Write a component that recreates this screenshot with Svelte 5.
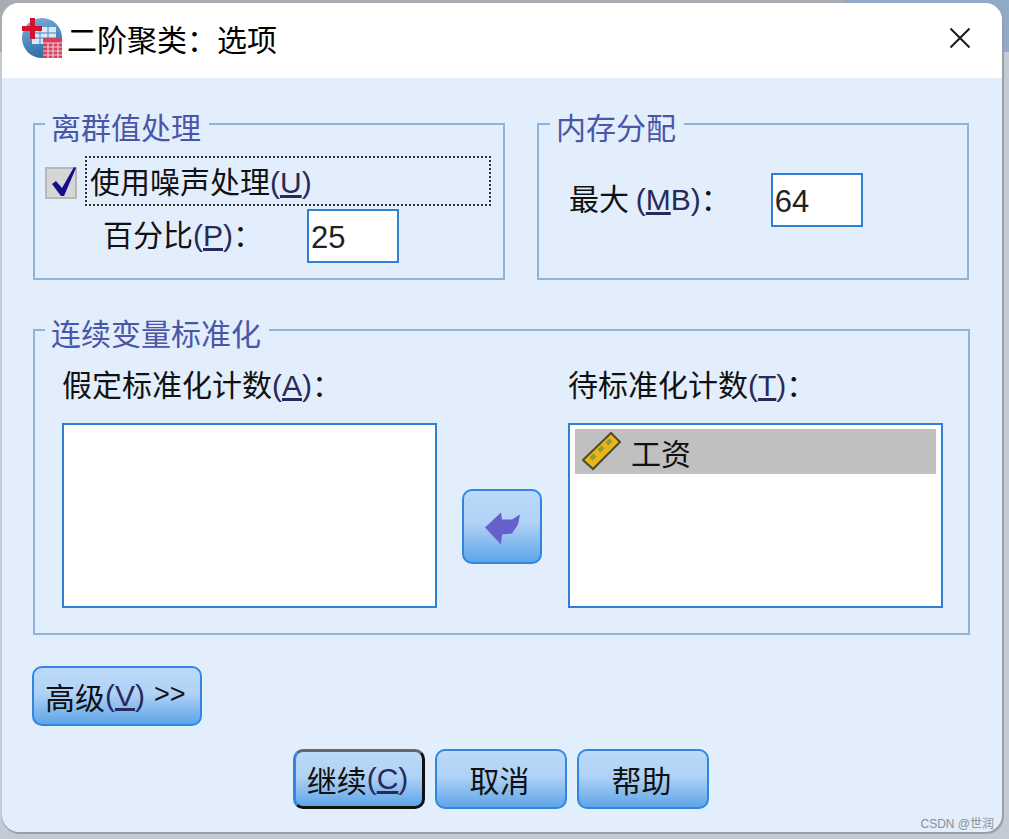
<script>
  const listItems = [{ name: '工资' }];
</script>

<div class="backdrop">
  <div class="dialog">
    <header class="titlebar">
      <svg class="app-icon" width="40" height="40" viewBox="0 0 40 40">
        <defs>
          <linearGradient id="orb" x1="0" y1="0" x2="0.3" y2="1">
            <stop offset="0" stop-color="#7fb2de" />
            <stop offset="1" stop-color="#2f6ea8" />
          </linearGradient>
        </defs>
        <circle cx="20" cy="20" r="20" fill="url(#orb)" />
        <rect x="10" y="9" width="24" height="17" fill="#d9e9f7" />
        <path d="M10 15h24M10 20h24M18 9v17M26 9v17" stroke="#6fa3d2" stroke-width="1.5" />
        <rect x="0" y="8" width="20" height="5" fill="#d3122e" />
        <rect x="8" y="0" width="5" height="21" fill="#d3122e" />
        <rect x="21" y="20" width="19" height="20" fill="#d8405f" />
        <path d="M21 25h19M21 29h19M21 33h19M21 37h19M26 25v15M31 25v15M36 25v15" stroke="#f6c9d3" stroke-width="1.2" />
      </svg>
      <span class="title">二阶聚类：选项</span>
      <svg class="close" width="20" height="20" viewBox="0 0 20 20">
        <path d="M0.5 0.5l19 19M19.5 0.5l-19 19" stroke="#1a1a1a" stroke-width="2" fill="none" />
      </svg>
    </header>

    <div class="content">
      <div class="top-row">
        <fieldset class="group noise">
          <legend>离群值处理</legend>
          <div class="check-row">
            <span class="checkbox">
              <svg width="32" height="32" viewBox="0 0 32 32">
                <path d="M7 17l4-3 6 7L29 0l2 1-12 28h-3z" fill="#14108c" />
              </svg>
            </span>
            <span class="focus-label">使用噪声处理<span class="mn">(<u>U</u>)</span></span>
          </div>
          <div class="percent-row">
            <span class="label">百分比<span class="mn">(<u>P</u>)</span>：</span>
            <input class="num" value="25" />
          </div>
        </fieldset>

        <fieldset class="group memory">
          <legend>内存分配</legend>
          <div class="memory-row">
            <span class="label">最大 <span class="mn">(<u>M</u>B)</span>：</span>
            <input class="num" value="64" />
          </div>
        </fieldset>
      </div>

      <fieldset class="group standard">
        <legend>连续变量标准化</legend>
        <div class="lists">
          <div class="list-col">
            <span class="label">假定标准化计数<span class="mn">(<u>A</u>)</span>：</span>
            <div class="listbox"></div>
          </div>
          <button class="btn arrow" aria-label="移动">
            <svg width="40" height="40" viewBox="0 0 40 40">
              <path d="M3 20.5L19 5.5l1 7h10l8-5-2 10-6 9-10 1-1 10z" fill="#6660cc" />
            </svg>
          </button>
          <div class="list-col">
            <span class="label">待标准化计数<span class="mn">(<u>T</u>)</span>：</span>
            <div class="listbox">
              {#each listItems as item}
                <div class="list-item">
                  <svg width="40" height="40" viewBox="0 0 40 40">
                    <path d="M1 28L29 1l9 9-27 27z" fill="#e8b715" stroke="#4e4a2c" stroke-width="2" />
                    <path d="M9 27l4-4M17 19l4-4M25 12l4-4" stroke="#8d9a3a" stroke-width="4" />
                  </svg>
                  <span>{item.name}</span>
                </div>
              {/each}
            </div>
          </div>
        </div>
      </fieldset>

      <div class="advanced-row">
        <button class="btn advanced">高级<span class="mn">(<u>V</u>)</span><span class="more">&gt;&gt;</span></button>
      </div>

      <div class="actions">
        <button class="btn action default">继续<span class="mn">(<u>C</u>)</span></button>
        <button class="btn action">取消</button>
        <button class="btn action">帮助</button>
      </div>
    </div>

    <span class="watermark">CSDN @世润</span>
  </div>
</div>

<style>
  :global(body) {
    margin: 0;
    background: #c3cad3;
  }

  .backdrop {
    width: 1009px;
    height: 839px;
    padding: 3px 0 0 2px;
    box-sizing: border-box;
    overflow: hidden;
    background:
      linear-gradient(90deg, #a9adb3 0, #a9adb3 845px, #8fa9c9 845px) top / 100% 52px no-repeat,
      #c3cad3;
  }

  .dialog {
    position: relative;
    width: 1000px;
    height: 829px;
    box-sizing: border-box;
    border-radius: 17px;
    overflow: hidden;
    background: #e2eefb;
    box-shadow: 1px 1px 0 1px #9aa0a8;
    font-family: "Noto Sans CJK SC", "Liberation Sans", sans-serif;
    font-size: 30px;
    color: #111;
  }

  .titlebar {
    height: 75px;
    background: #fff;
    display: flex;
    align-items: center;
    padding: 0 32px 5px 20px;
    box-sizing: border-box;
  }

  .app-icon {
    flex: none;
    margin-right: 5px;
  }

  .title {
    font-size: 30px;
    line-height: 1;
    color: #000;
    flex: 1;
  }

  .close {
    flex: none;
  }

  .content {
    padding: 25px 32px 0 31px;
    display: flex;
    flex-direction: column;
  }

  .top-row {
    display: flex;
    gap: 32px;
    height: 177px;
  }

  .group {
    margin: 0;
    padding: 0;
    min-width: 0;
    border: 2px solid #8db4da;
    box-sizing: border-box;
  }

  .group legend {
    margin-left: 10px;
    padding: 4px 8px 0 6px;
    font-size: 30px;
    line-height: 38px;
    color: #4a56a8;
  }

  .noise {
    width: 472px;
  }

  .memory {
    width: 432px;
  }

  .memory legend {
    margin-left: 11px;
  }

  .check-row {
    display: flex;
    align-items: center;
    margin: 11px 0 0 10px;
  }

  .checkbox {
    width: 32px;
    height: 32px;
    margin-top: 3px;
    flex: none;
    border: 2px solid #b8b8b8;
    background: #d6d6d6;
    box-sizing: border-box;
    position: relative;
  }

  .checkbox svg {
    position: absolute;
    left: -2px;
    top: -2px;
  }

  .focus-label {
    margin-left: 8px;
    width: 406px;
    height: 50px;
    line-height: 44px;
    box-sizing: border-box;
    border: 2px dotted #333;
    padding-left: 3px;
  }

  .label {
    white-space: nowrap;
    line-height: 40px;
    margin-bottom: 3px;
  }

  .mn {
    font-family: "Liberation Sans", sans-serif;
    font-size: 30px;
    color: #2a2a5a;
  }

  .percent-row {
    display: flex;
    align-items: center;
    margin: 3px 0 0 68px;
  }

  .percent-row .num {
    margin-left: 44px;
  }

  .memory-row {
    display: flex;
    align-items: center;
    margin: 28px 0 0 30px;
  }

  .memory-row .num {
    margin-left: 40px;
  }

  .num {
    width: 92px;
    height: 54px;
    box-sizing: border-box;
    border: 2px solid #2f80d2;
    background: #fff;
    padding: 4px 0 0 2px;
    font-family: "Liberation Sans", sans-serif;
    font-size: 31px;
    color: #222;
    outline: none;
    border-radius: 0;
  }

  .standard {
    margin-top: 29px;
    height: 326px;
    padding: 0 25px 0 27px;
  }

  .standard legend {
    margin-left: -17px;
  }

  .lists {
    display: flex;
    align-items: flex-end;
    margin-top: 12px;
  }

  .list-col {
    display: flex;
    flex-direction: column;
    gap: 14px;
    width: 375px;
  }

  .listbox {
    height: 185px;
    box-sizing: border-box;
    border: 2px solid #2f80d2;
    background: #fff;
    padding: 4px 5px;
  }

  .list-item {
    height: 45px;
    background: #c0c0c0;
    display: flex;
    align-items: center;
    gap: 9px;
    padding-left: 7px;
    font-size: 30px;
    line-height: 1;
  }

  .btn {
    font-family: inherit;
    font-size: 30px;
    color: #111;
    padding: 0;
    border: 2px solid #2f87e0;
    border-radius: 10px;
    background: linear-gradient(#bcdaf9 0%, #b0d2f6 45%, #5ea5e8 100%);
    display: flex;
    align-items: center;
    justify-content: center;
    line-height: 1;
    box-sizing: border-box;
  }

  .arrow {
    width: 80px;
    height: 75px;
    flex: none;
    margin: 0 26px 44px 25px;
  }

  .advanced-row {
    margin-top: 31px;
  }

  .advanced {
    width: 170px;
    height: 60px;
    margin-left: -1px;
    justify-content: flex-start;
    padding-left: 11px;
  }

  .more {
    margin-left: 9px;
    font-family: "Liberation Sans", sans-serif;
    font-size: 27px;
    margin-top: -4px;
  }

  .actions {
    display: flex;
    gap: 10px;
    margin-top: 23px;
    margin-left: 260px;
  }

  .action {
    width: 132px;
    height: 60px;
    padding-right: 3px;
  }

  .default {
    border-color: #666 #111 #111 #2f87e0;
    border-width: 3px;
  }

  .watermark {
    position: absolute;
    right: 8px;
    bottom: 1px;
    font-family: "Liberation Sans", "Noto Sans CJK SC", sans-serif;
    font-size: 12px;
    line-height: 1.2;
    color: #8a8f96;
  }
</style>
